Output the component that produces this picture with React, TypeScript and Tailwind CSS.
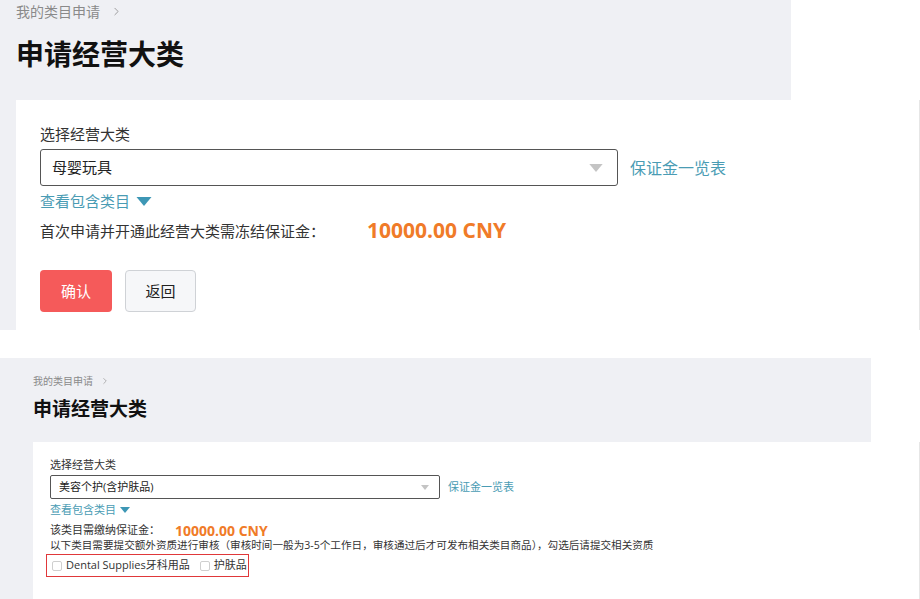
import { ChevronRight } from 'lucide-react';

const font = { fontFamily: '"Open Sans", "Noto Sans CJK SC", sans-serif' };

function Caret({ className }: { className: string }) {
  return (
    <svg viewBox="0 0 10 6" className={className}>
      <path d="M0 0 L10 0 L5 6 Z" fill="currentColor" />
    </svg>
  );
}

function Checkbox() {
  return <span className="inline-block shrink-0 w-[10px] h-[10px] border border-[#cfcfcf] rounded-[2px] bg-white" />;
}

export default function App() {
  return (
    <div className="w-[920px] h-[599px] overflow-hidden bg-white" style={font}>
      {/* ---- first screenshot ---- */}
      <div className="h-[330px] flex flex-col">
        <div className="flex h-[100px]">
          <div className="w-[791px] bg-[#eff0f4] px-4 pt-[2px]">
            <div className="flex items-center gap-[10px] text-[14px] text-[#8a8a8a] h-[18px]">
              我的类目申请
              <ChevronRight size={13} strokeWidth={1.5} />
            </div>
            <h1 className="mt-[16px] text-[28px] leading-[36px] font-bold text-[#111]">申请经营大类</h1>
          </div>
          <div className="flex-1 bg-white" />
        </div>
        <div className="flex flex-1">
          <div className="w-4 bg-[#eff0f4]" />
          <div className="flex-1 bg-white border-r border-[#e6e6e6] pl-6 pt-[24px]">
            <div className="text-[15px] leading-[20px] text-[#333]">选择经营大类</div>
            <div className="flex items-center mt-[5px]">
              <div className="w-[578px] h-[37px] border-[1.5px] border-[#555] rounded-[3px] flex items-center justify-between pl-[11px] pr-[14px]">
                <span className="text-[15px] text-[#222]">母婴玩具</span>
                <Caret className="w-[14px] h-[8px] text-[#c4c4c4]" />
              </div>
              <span className="ml-3 text-[16px] text-[#4a9cb4]">保证金一览表</span>
            </div>
            <div className="flex items-center gap-[6px] mt-[4px] h-[22px] text-[15px] text-[#4a9cb4]">
              查看包含类目
              <Caret className="w-[16px] h-[9px] text-[#3d97b5]" />
            </div>
            <div className="flex items-center h-[30px] mt-[4px]">
              <span className="w-[327px] text-[15px] text-[#333]">首次申请并开通此经营大类需冻结保证金：</span>
              <span className="text-[21px] font-bold text-[#f07b28]">10000.00 CNY</span>
            </div>
            <div className="flex gap-[13px] mt-[24px]">
              <button className="w-[72px] h-[42px] rounded-[4px] bg-[#f55a5a] text-white text-[15px]">确认</button>
              <button className="w-[71px] h-[42px] rounded-[4px] bg-[#f6f7f9] border border-[#cfd2d6] text-[#222] text-[15px]">返回</button>
            </div>
          </div>
        </div>
      </div>

      {/* ---- second screenshot ---- */}
      <div className="h-[28px] bg-white" />
      <div className="flex flex-col h-[241px]">
        <div className="flex h-[84px]">
          <div className="w-[871px] bg-[#eff0f4] px-[33px] pt-[16px]">
            <div className="flex items-center gap-[7px] text-[10px] text-[#8a8a8a] h-[14px]">
              我的类目申请
              <ChevronRight size={10} strokeWidth={1.5} />
            </div>
            <h1 className="mt-[9px] text-[19px] leading-[24px] font-bold text-[#111]">申请经营大类</h1>
          </div>
          <div className="flex-1 bg-white" />
        </div>
        <div className="flex flex-1">
          <div className="w-[33px] bg-[#eff0f4]" />
          <div className="flex-1 bg-white border-r border-[#e6e6e6] pl-[17px] pt-[16px]">
            <div className="text-[11px] leading-[14px] text-[#333]">选择经营大类</div>
            <div className="flex items-center mt-[3px]">
              <div className="w-[390px] h-[24px] border border-[#555] rounded-[2px] flex items-center justify-between pl-2 pr-[10px]">
                <span className="text-[11px] text-[#222]">美容个护(含护肤品)</span>
                <Caret className="w-[8px] h-[5px] text-[#c4c4c4]" />
              </div>
              <span className="ml-2 text-[11px] text-[#4a9cb4]">保证金一览表</span>
            </div>
            <div className="flex items-center gap-1 h-[16px] mt-[3px] text-[11px] text-[#4a9cb4]">
              查看包含类目
              <Caret className="w-[10px] h-[6px] text-[#3d97b5]" />
            </div>
            <div className="flex items-center h-[18px] mt-[3px]">
              <span className="w-[125px] text-[11px] text-[#333]">该类目需缴纳保证金：</span>
              <span className="text-[14px] font-bold text-[#f07b28]">10000.00 CNY</span>
            </div>
            <div className="text-[10.6px] leading-[14px] text-[#333] -mt-[1px] whitespace-nowrap">
              以下类目需要提交额外资质进行审核（审核时间一般为3-5个工作日，审核通过后才可发布相关类目商品），勾选后请提交相关资质
            </div>
            <div className="flex items-center -ml-[4px] mt-[2px] w-[203px] h-[23px] border-[1.5px] border-[#e0383a] pl-[5px] gap-[4px] text-[11px] text-[#333] whitespace-nowrap">
              <Checkbox />
              <span>Dental Supplies牙科用品</span>
              <span className="ml-[6px] flex"><Checkbox /></span>
              <span>护肤品</span>
            </div>
          </div>
        </div>
      </div>
    </div>
  );
}
